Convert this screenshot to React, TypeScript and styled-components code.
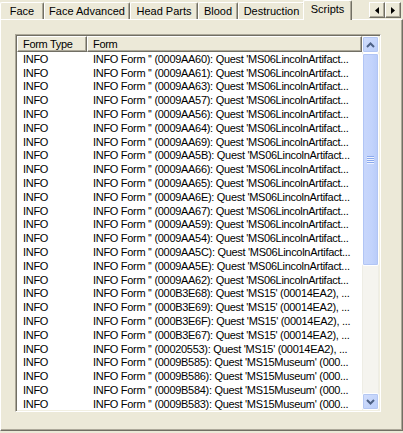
import React from 'react';
import styled, { createGlobalStyle } from 'styled-components';

const GlobalStyle = createGlobalStyle`
  html, body {
    margin: 0;
    padding: 0;
    background: #ece9d8;
  }
  body {
    font-family: 'Liberation Sans', Arial, sans-serif;
    font-size: 11px;
    color: #000;
  }
`;

const Window = styled.div`
  width: 403px;
  height: 433px;
  display: flex;
  flex-direction: column;
  background: #ece9d8;
  overflow: hidden;
`;

const TabStrip = styled.div`
  display: flex;
  align-items: flex-end;
  height: 19px;
  position: relative;
  z-index: 2;
`;

const Tab = styled.div<{ $w: number; $active?: boolean }>`
  box-sizing: border-box;
  width: ${(p) => p.$w}px;
  height: ${(p) => (p.$active ? 20 : 17)}px;
  margin: ${(p) => (p.$active ? '0 -1px -1px -2px' : '0')};
  border-top: 1px solid #fff;
  border-left: 1px solid #fff;
  border-right: 1px solid #716f64;
  border-radius: 2px 2px 0 0;
  box-shadow: inset -1px 0 #aca899;
  background: #ece9d8;
  display: flex;
  align-items: ${(p) => (p.$active ? 'flex-start' : 'center')};
  padding-top: ${(p) => (p.$active ? '2px' : '0')};
  justify-content: center;
  white-space: nowrap;
  position: relative;
  z-index: ${(p) => (p.$active ? 3 : 1)};
`;

const Arrows = styled.div`
  display: flex;
  margin-left: auto;
  margin-right: 2px;
  align-self: center;
  margin-top: 1px;
`;

const ArrowButton = styled.div`
  box-sizing: border-box;
  width: 16px;
  height: 16px;
  background: #ece9d8;
  border: 1px solid;
  border-color: #fff #716f64 #716f64 #fff;
  box-shadow: inset -1px -1px #aca899;
  display: flex;
  align-items: center;
  justify-content: center;
`;

const Panel = styled.div`
  box-sizing: border-box;
  flex: 1;
  margin-bottom: 2px;
  border: 1px solid;
  border-color: #fff #716f64 #716f64 #fff;
  box-shadow: inset -1px -1px #aca899;
  padding: 14px 0 0 14px;
  position: relative;
  z-index: 1;
`;

const ListView = styled.div`
  box-sizing: border-box;
  width: 366px;
  height: 378px;
  border: 1px solid;
  border-color: #aca899 #fff #fff #aca899;
  box-shadow: inset 1px 1px #716f64, inset -1px -1px #f1efe2;
  padding: 1px;
  background: #fff;
  display: flex;
  letter-spacing: -0.3px;
`;

const Grid = styled.div`
  flex: 1;
  display: flex;
  flex-direction: column;
  overflow: hidden;
`;

const HeaderRow = styled.div`
  display: flex;
  height: 16px;
  flex-shrink: 0;
  background: #ece9d8;
`;

const HeaderCell = styled.div<{ $w?: number }>`
  box-sizing: border-box;
  ${(p) => (p.$w ? `width: ${p.$w}px;` : 'flex: 1;')}
  border-top: 1px solid #fff;
  border-left: 1px solid #fff;
  border-right: 1px solid #716f64;
  border-bottom: 1px solid #716f64;
  box-shadow: inset -1px -1px #aca899;
  padding-left: 5px;
  display: flex;
  align-items: center;
  white-space: nowrap;
`;

const Row = styled.div`
  display: flex;
  height: 13.8px;
  flex-shrink: 0;
  align-items: center;
  white-space: nowrap;
`;

const Cell = styled.div<{ $w?: number }>`
  box-sizing: border-box;
  ${(p) => (p.$w ? `width: ${p.$w}px;` : 'flex: 1;')}
  padding-left: 6px;
  overflow: hidden;
`;

const ScrollBar = styled.div`
  width: 17px;
  display: flex;
  flex-direction: column;
  background: #f5f4ef;
  box-shadow: inset 1px 0 #eeede5, inset -1px 0 #eeede5;
`;

const ScrollButton = styled.div`
  box-sizing: border-box;
  width: 17px;
  height: 17px;
  border: 1px solid #fff;
  border-radius: 2px;
  background: linear-gradient(135deg, #d2defc 0%, #b9cdf9 100%);
  box-shadow: inset 0 0 0 1px #b4c7f3;
  display: flex;
  align-items: center;
  justify-content: center;
`;

const Track = styled.div`
  flex: 1;
  display: flex;
  flex-direction: column;
`;

const Thumb = styled.div`
  box-sizing: border-box;
  height: 213px;
  border: 1px solid #fff;
  border-radius: 2px;
  background: linear-gradient(90deg, #c9d7fb 0%, #c2d3fc 60%, #b8cbf8 100%);
  box-shadow: inset 0 0 0 1px #b1c5f5;
  display: flex;
  align-items: center;
  justify-content: center;
`;

const Grip = styled.div`
  width: 7px;
  display: flex;
  flex-direction: column;
  gap: 1px;

  span {
    height: 1px;
    background: #8ba9ee;
    box-shadow: 0 1px #eef3fe;
  }
`;

const Chevron = ({ up }: { up?: boolean }) => (
  <svg width="9" height="6" viewBox="0 0 9 6">
    <path
      d={up ? 'M1 5 L4.5 1.5 L8 5' : 'M1 1 L4.5 4.5 L8 1'}
      fill="none"
      stroke="#4d6185"
      strokeWidth="2"
    />
  </svg>
);

const Triangle = ({ left }: { left?: boolean }) => (
  <svg width="4" height="7" viewBox="0 0 4 7">
    <path d={left ? 'M4 0 L0 3.5 L4 7 Z' : 'M0 0 L4 3.5 L0 7 Z'} fill="#000" />
  </svg>
);

const tabs = [
  { label: 'Face', w: 44 },
  { label: 'Face Advanced', w: 86 },
  { label: 'Head Parts', w: 68 },
  { label: 'Blood', w: 40 },
  { label: 'Destruction', w: 67 },
  { label: 'Scripts', w: 49, active: true },
];

const lincoln = [
  'AA60', 'AA61', 'AA63', 'AA57', 'AA56', 'AA64', 'AA69', 'AA5B', 'AA66',
  'AA65', 'AA6E', 'AA67', 'AA59', 'AA54', 'AA5C', 'AA5E', 'AA62',
];

const rows: string[] = [
  ...lincoln.map((id) => `INFO Form '' (0009${id}): Quest 'MS06LincolnArtifact...`),
  ...['000B3E68', '000B3E69', '000B3E6F', '000B3E67', '00020553'].map(
    (id) => `INFO Form '' (${id}): Quest 'MS15' (00014EA2), ...`
  ),
  ...['0009B585', '0009B586', '0009B584', '0009B583'].map(
    (id) => `INFO Form '' (${id}): Quest 'MS15Museum' (000...`
  ),
];

export default function App() {
  return (
    <>
      <GlobalStyle />
      <Window>
        <TabStrip>
          {tabs.map((t) => (
            <Tab key={t.label} $w={t.w} $active={t.active}>
              {t.label}
            </Tab>
          ))}
          <Arrows>
            <ArrowButton>
              <Triangle left />
            </ArrowButton>
            <ArrowButton>
              <Triangle />
            </ArrowButton>
          </Arrows>
        </TabStrip>
        <Panel>
          <ListView>
            <Grid>
              <HeaderRow>
                <HeaderCell $w={70}>Form Type</HeaderCell>
                <HeaderCell>Form</HeaderCell>
              </HeaderRow>
              {rows.map((text, i) => (
                <Row key={i}>
                  <Cell $w={70}>INFO</Cell>
                  <Cell>{text}</Cell>
                </Row>
              ))}
            </Grid>
            <ScrollBar>
              <ScrollButton>
                <Chevron up />
              </ScrollButton>
              <Track>
                <Thumb>
                  <Grip>
                    <span />
                    <span />
                    <span />
                    <span />
                  </Grip>
                </Thumb>
              </Track>
              <ScrollButton>
                <Chevron />
              </ScrollButton>
            </ScrollBar>
          </ListView>
        </Panel>
      </Window>
    </>
  );
}
